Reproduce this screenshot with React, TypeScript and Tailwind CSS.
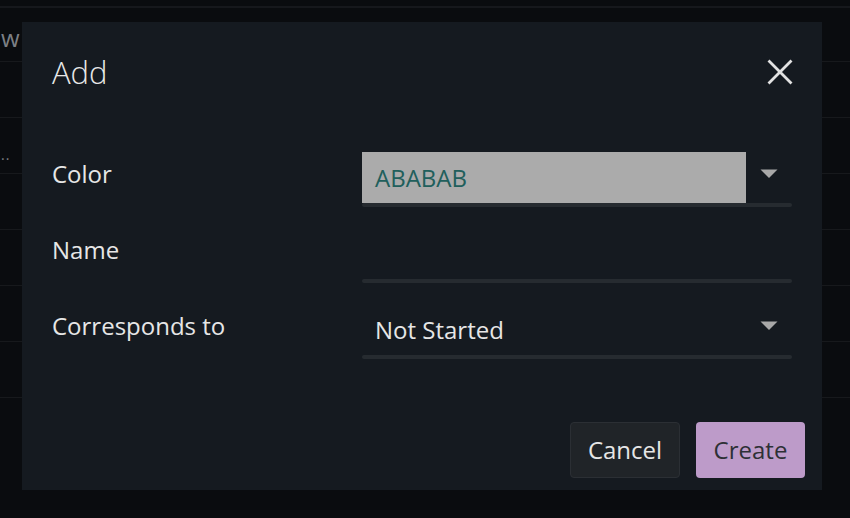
import React from "react";

function Caret() {
  return (
    <svg width="18" height="9" viewBox="0 0 18 9" className="block">
      <path d="M0.5 0.5 H17.5 L9 9 Z" fill="#a8a8a8" />
    </svg>
  );
}

function CloseIcon() {
  return (
    <svg width="26" height="26" viewBox="0 0 26 26" className="block">
      <path d="M2.5 2.5 L23.5 23.5 M23.5 2.5 L2.5 23.5" stroke="#e2e2e2" strokeWidth="2.8" strokeLinecap="square" />
    </svg>
  );
}

function Field({ children, caret, filled }: { children?: React.ReactNode; caret?: boolean; filled?: boolean }) {
  return (
    <div className="w-[430px] h-[55px] flex flex-col">
      <div className="h-[51px] flex">
        <div className={`flex-1 h-full flex items-center pl-[13px] ${filled ? "bg-[#ababab]" : ""}`}>{children}</div>
        <div className="w-[46px] h-full flex justify-center pt-[17px]">{caret ? <Caret /> : null}</div>
      </div>
      <div className="h-[4px] rounded-[2px] bg-[#262b30]" />
    </div>
  );
}

function Row({ label, children }: { label: string; children: React.ReactNode }) {
  return (
    <div className="flex items-start">
      <div className="w-[310px] leading-[44px] text-[24px] text-[#e6e6e6]">{label}</div>
      {children}
    </div>
  );
}

export default function App() {
  const rows = [0, 1, 2, 3, 4, 5];
  return (
    <div className="relative w-[850px] h-[518px] overflow-hidden bg-[#0a0c0f] font-['Open_Sans','Noto_Sans',sans-serif]">
      {/* background page */}
      <div className="flex flex-col">
        <div className="h-[8px] border-b-2 border-[#16181c]" />
        <div className="h-[54px] border-b border-[#17191c] flex items-center">
          <span className="ml-[1px] pt-[6px] text-[24px] text-[#7d8085] leading-none">w</span>
        </div>
        {rows.map((r) => (
          <div key={r} className="h-[56px] border-b border-[#17191c] flex items-end">
            {r === 1 ? (
              <span className="ml-[1px] mb-[11px] text-[14px] leading-none tracking-[1px] text-[#7d8085]">..</span>
            ) : null}
          </div>
        ))}
      </div>

      {/* dialog */}
      <div className="absolute left-[22px] top-[22px] w-[800px] h-[468px] bg-[#151a20] flex flex-col">
        <div className="pt-[30px] h-[70px] pl-[30px] pr-[29px] flex items-center justify-between">
          <div className="text-[31px] font-light leading-[40px] text-[#e8e8e8]">Add</div>
          <CloseIcon />
        </div>
        <div className="mt-[60px] pl-[30px] flex flex-col gap-[21px]">
          <Row label="Color">
            <Field caret filled>
              <span className="text-[24px] text-[#215f5c] leading-none">ABABAB</span>
            </Field>
          </Row>
          <Row label="Name">
            <Field />
          </Row>
          <Row label="Corresponds to">
            <Field caret>
              <span className="text-[24px] text-[#e6e6e6] leading-none">Not Started</span>
            </Field>
          </Row>
        </div>
        <div className="mt-[63px] pr-[17px] flex justify-end gap-[16px]">
          <button className="h-[56px] w-[110px] rounded-[4px] border border-[#2b2f34] bg-[#202428] text-[24px] text-[#e6e6e6]">
            Cancel
          </button>
          <button className="h-[56px] w-[109px] rounded-[4px] bg-[#bd9bc9] text-[24px] text-[#2d3035]">
            Create
          </button>
        </div>
      </div>
    </div>
  );
}
